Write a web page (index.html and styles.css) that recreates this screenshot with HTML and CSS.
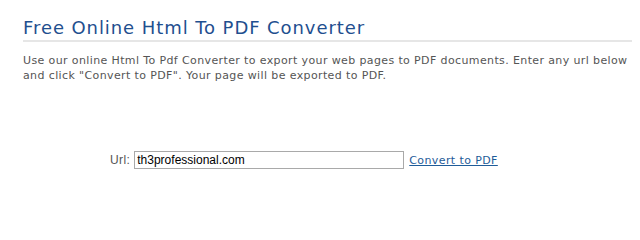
FILE: index.html
```html
<!DOCTYPE html>
<html>
<head>
<meta charset="utf-8">
<title>Free Online Html To PDF Converter</title>
<link rel="stylesheet" href="styles.css">
</head>
<body>
<div class="page">
  <h1 class="title">Free Online Html To PDF Converter</h1>
  <p class="intro">Use our online Html To Pdf Converter to export your web pages to PDF documents. Enter any url below and click "Convert to PDF". Your page will be exported to PDF.</p>
  <form class="convert" onsubmit="return false">
    <label class="url-label" for="url">Url:</label>
    <input class="url-input" id="url" type="text" value="th3professional.com">
    <a class="convert-link" href="#">Convert to PDF</a>
  </form>
</div>
</body>
</html>
```
FILE: styles.css
```css
html, body {
  margin: 0;
  padding: 0;
  background: #ffffff;
}
.page {
  width: 609px;
  padding: 16px 0 0 23px;
  font-family: "DejaVu Sans", Verdana, sans-serif;
}
.title {
  margin: 0;
  padding-bottom: 0;
  font-size: 18px;
  font-weight: normal;
  line-height: 24px;
  letter-spacing: 0.92px;
  color: #1f4f8f;
  border-bottom: 2px solid #e6e6e6;
}
.intro {
  margin: 11px 0 0 0;
  font-size: 11px;
  line-height: 15px;
  letter-spacing: 0.38px;
  color: #555555;
}
.convert {
  display: flex;
  align-items: center;
  margin: 68px 0 0 87px;
}
.url-label {
  font-family: "Liberation Sans", Arial, sans-serif;
  font-size: 12px;
  letter-spacing: 0.4px;
  color: #555555;
  margin-right: 4px;
}
.url-input {
  box-sizing: border-box;
  width: 270px;
  height: 18px;
  padding: 0 2px;
  border: 1px solid #a9a9a9;
  font-family: "Liberation Sans", Arial, sans-serif;
  font-size: 12px;
  color: #000;
}
.convert-link {
  margin-left: 5px;
  font-size: 11px;
  letter-spacing: 0.4px;
  color: #1f5c99;
  text-decoration: underline;
}
```
